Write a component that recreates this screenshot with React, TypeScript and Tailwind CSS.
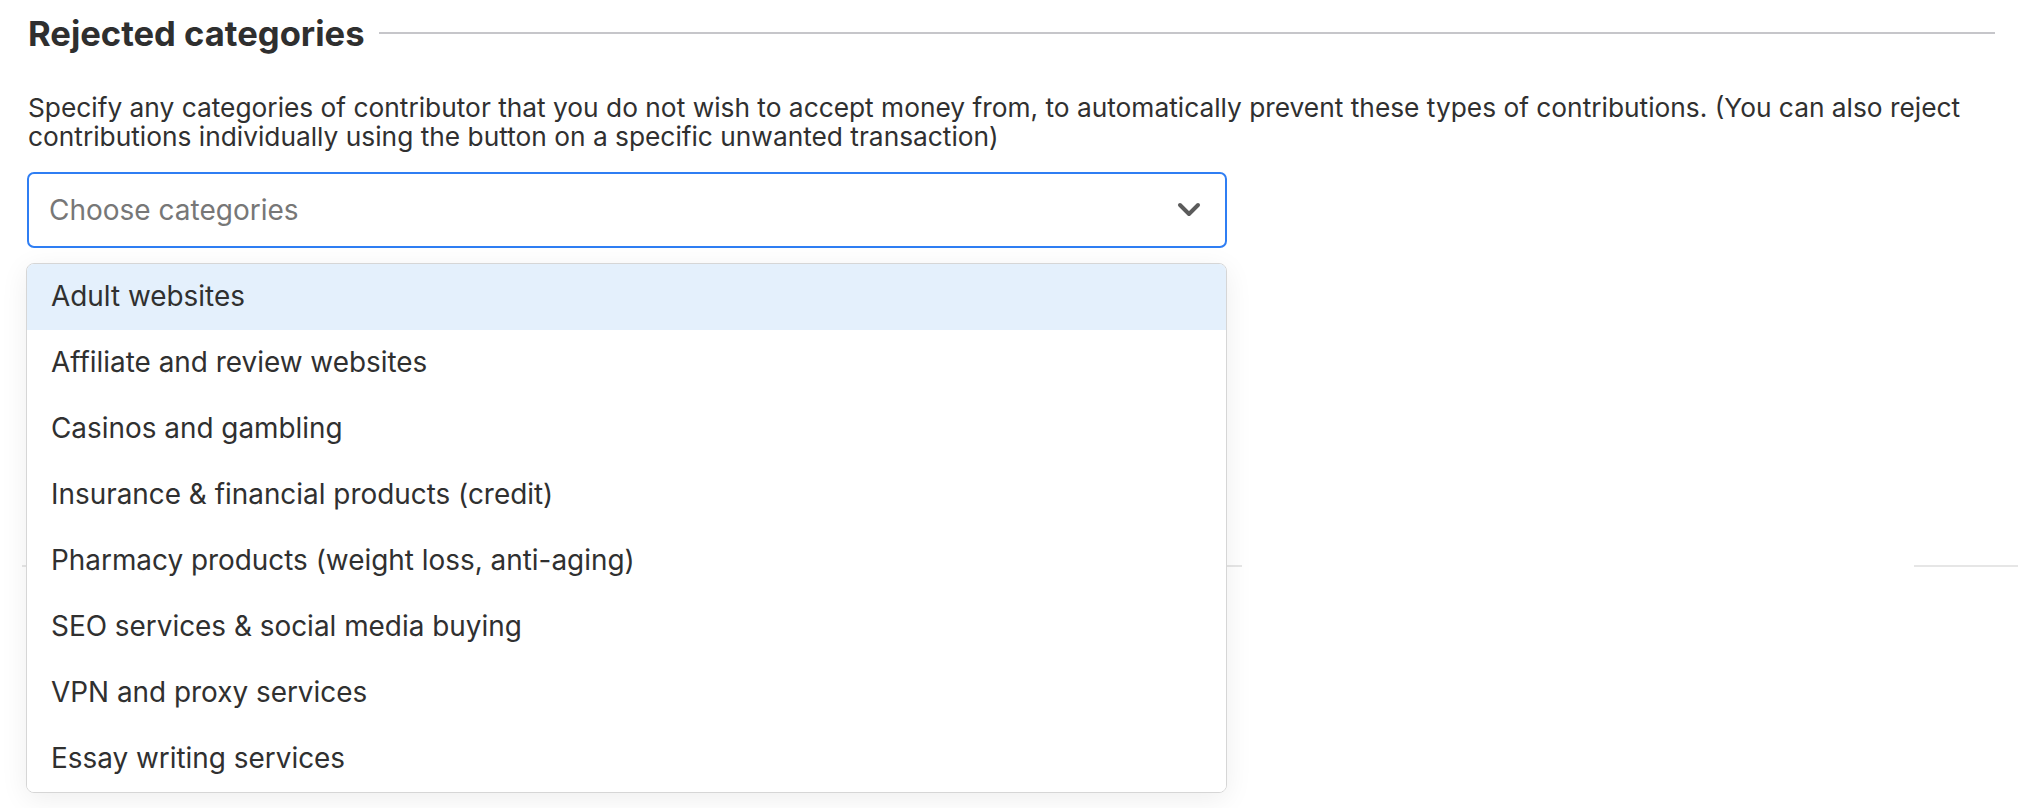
import React from 'react';

const categories = [
  'Adult websites',
  'Affiliate and review websites',
  'Casinos and gambling',
  'Insurance & financial products (credit)',
  'Pharmacy products (weight loss, anti-aging)',
  'SEO services & social media buying',
  'VPN and proxy services',
  'Essay writing services',
];

function ChevronDown() {
  return (
    <svg width="24" height="15" viewBox="0 0 24 15" fill="none" className="shrink-0">
      <path d="M3 3 L12 12 L21 3" stroke="#5b5b5b" strokeWidth="4" strokeLinecap="round" strokeLinejoin="round" />
    </svg>
  );
}

export default function App() {
  return (
    <div className="min-h-[808px] w-full bg-white font-['Inter',sans-serif] text-[#333333] overflow-hidden">
      <div className="pl-[27px] pr-[23px] pt-[12px]">
        {/* Heading with rule */}
        <div className="flex items-center gap-[14px]">
          <h2 className="text-[34.6px] leading-[42px] font-bold text-[#2f2f2f] whitespace-nowrap pl-px">
            Rejected categories
          </h2>
          <div className="h-[2px] flex-1 bg-[#c6c6ca]" />
        </div>

        <p className="mt-[39px] pl-px text-[26.3px] leading-[29.4px] text-[#303030]">
          Specify any categories of contributor that you do not wish to accept money from, to automatically prevent these
          types of contributions. (You can also reject contributions individually using the button on a specific unwanted
          transaction)
        </p>

        {/* Select */}
        <div className="relative mt-[20px] w-[1200px]">
          <div className="flex h-[76px] items-center justify-between rounded-[7px] border-2 border-[#2f7ef3] bg-white pl-[20px] pr-[24px]">
            <span className="text-[28px] text-[#777777]">Choose categories</span>
            <ChevronDown />
          </div>

          <div className="absolute left-[-1px] top-[calc(100%+15px)] z-10 w-[1201px] overflow-hidden rounded-[8px] border border-[#d6d6d6] bg-white shadow-[0_6px_28px_rgba(0,0,0,0.07)]">
            {categories.map((c, i) => (
              <div
                key={c}
                className={`flex h-[66px] items-center pl-[24px] text-[27.9px] text-[#303030] ${
                  i === 0 ? 'bg-[#e4f0fc]' : 'bg-white'
                }`}
              >
                {c}
              </div>
            ))}
          </div>
        </div>
      </div>

      {/* Content partly hidden behind the open menu */}
      <div className="mt-[317px] flex items-center pl-[22px]">
        <div className="h-[2px] w-[1220px] bg-[#e6e6e6]" />
        <div className="flex-1" />
        <div className="h-[2px] w-[104px] bg-[#e6e6e6]" />
      </div>
    </div>
  );
}
